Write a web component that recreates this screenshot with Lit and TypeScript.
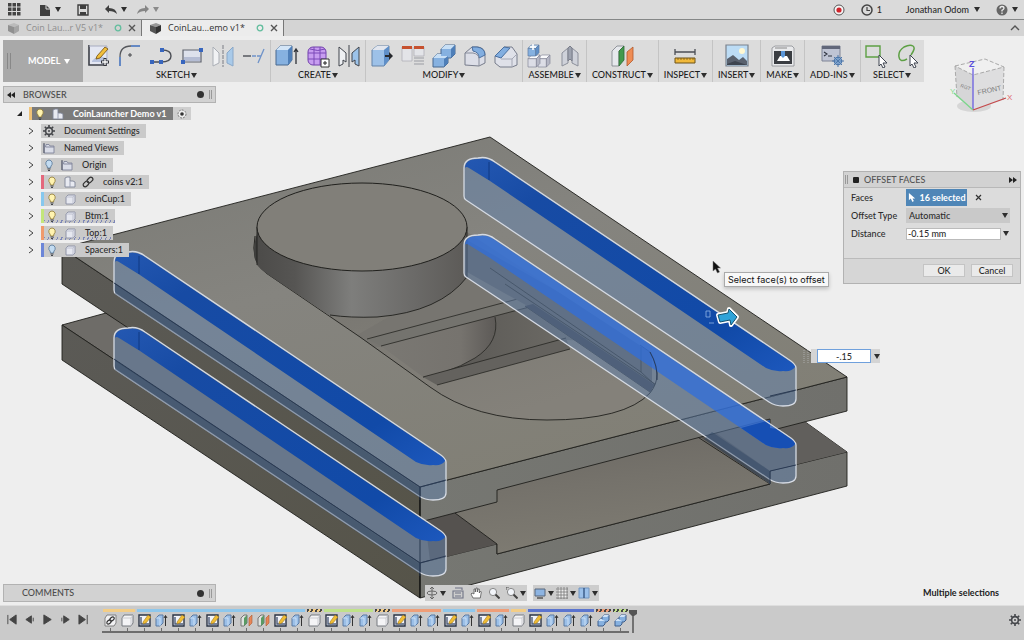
import { LitElement, html, css, svg, nothing } from "lit";
import { customElement, state } from "lit/decorators.js";
import { styleMap } from "lit/directives/style-map.js";

const cube = (x: number, y: number, s: number, top = "#c3dcf4", front = "#86b1e0", side = "#5f8fc8", line = "#5b7aa0") => svg`
  <g stroke=${line} stroke-width=".7" stroke-linejoin="round">
    <path fill=${front} d="M${x} ${y + s * 0.3}H${x + s * 0.7}V${y + s}H${x}Z"/>
    <path fill=${top} d="M${x} ${y + s * 0.3}L${x + s * 0.3} ${y}H${x + s}L${x + s * 0.7} ${y + s * 0.3}Z"/>
    <path fill=${side} d="M${x + s * 0.7} ${y + s * 0.3}L${x + s} ${y}V${y + s * 0.7}L${x + s * 0.7} ${y + s}Z"/>
  </g>`;
const greyCube = (x: number, y: number, s: number) => cube(x, y, s, "#fafafc", "#dcdde6", "#b4b6c4", "#85879a");

const ribbonArt: Record<string, unknown> = {
  sketch: svg`<path d="M2 2h19v19H2z" fill="#e4e7f2"/><path d="M2 1v20h18" fill="none" stroke="#3d4048" stroke-width="1.6"/><path d="M2 2h18v15" fill="none" stroke="#a7acc0" stroke-width="1"/><path d="M5 17q6-7 13-3v4H5z" fill="#b7c2dd"/><path d="M10 12l8-9 3 2-8 9-4 1z" fill="#f2bf3c" stroke="#7d5a18" stroke-width=".9"/><path d="M18 14v8M14 18h8" stroke="#2f3238" stroke-width="3"/><path d="M18 15v6M15 18h6" stroke="#fff" stroke-width="1.3"/>`,
  arc: svg`<path d="M2 22V13" stroke="#6589c4" stroke-width="2"/><path d="M2 13Q2 2 13 2" fill="none" stroke="#55575c" stroke-width="1.3"/><path d="M13 2h9" stroke="#6589c4" stroke-width="2"/><path d="M10 11h4M12 9v4" stroke="#44464a" stroke-width="1"/>`,
  line: svg`<path d="M2 18h10q10 0 10-6t-9-6" fill="none" stroke="#4b4e55" stroke-width="1.4"/><path d="M1 16h4v4H1zM10 16h4v4h-4zM11 4h4v4h-4z" fill="#3866be"/>`,
  rect: svg`<path d="M3 6h18v12H3z" fill="#dde1ec" stroke="#60646f" stroke-width="1.2"/><path d="M4 13h16v4H4z" fill="#b5bdd4"/><path d="M1 16h4v4H1zM19 4h4v4h-4z" fill="#3866be"/>`,
  mirrorSketch: svg`<path d="M2 3l6 6v10l-6 3z" fill="#f1f2f4" stroke="#abafb6"/><path d="M22 3l-6 6v10l6 3z" fill="#a9cae9" stroke="#8aa8c8"/><path d="M12 1v22" stroke="#7a7d84" stroke-width="1" stroke-dasharray="4 1"/>`,
  trim: svg`<path d="M1 12h8" stroke="#4b4e55" stroke-width="1.4"/><path d="M10 12h9" stroke="#6f93c9" stroke-width="1.4" stroke-dasharray="4 1"/><path d="M22 5l-6 14" stroke="#6f93c9" stroke-width="1.3"/>`,
  extrude: svg`<path d="M1 6l4-4h12v14l-4 5H1z" fill="#86b1e0" stroke="#48688f"/><path d="M1 6l4-4h12l-4 4z" fill="#d3e5f7"/><path d="M13 6l4-4v14l-4 5z" fill="#4f7fb8"/><path d="M21 20V6M19 8l2-3 2 3" fill="none" stroke="#2f3238" stroke-width="1.3"/>`,
  form: svg`<rect x="2" y="3" width="18" height="18" rx="5" fill="#c79df0" stroke="#7140ab"/><path d="M2 9h18M2 15h18M8 3v18M14 3v18M4 5q8 3 15 0" fill="none" stroke="#7b49b8" stroke-width="1"/><path d="M15 15h8v8h-8z" fill="#fff" stroke="#333"/><path d="M17 19h4M19 17v4" stroke="#222"/>`,
  mirror: svg`<path d="M2 3l7 6v9l-3-2v4l-4 2z" fill="#eef0f3" stroke="#41454d"/><path d="M22 3l-7 6v9l3-2v4l4 2z" fill="#9cc3ea" stroke="#41454d"/><path d="M12 1v22" stroke="#41454d"/>`,
  press: svg`<path d="M2 6l5-4h12v14l-5 6H2z" fill="#9dc1e8" stroke="#6483a8"/><path d="M2 6l5-4h12l-5 4z" fill="#e2e6ee"/><path d="M14 6l5-4v14l-5 6z" fill="#5f8fc8"/><path d="M15 11h4V8l4 4-4 4v-3h-4z" fill="#26282c"/>`,
  offset: svg`<path d="M1 3h10v14H1zM13 3h10v9H13z" fill="#e3e4e8" stroke="#a9abb2" stroke-width=".7"/><path d="M1 2h10v3H1zM13 2h10v3H13z" fill="#c6512f"/><path d="M13 14h10M13 17h10M13 20h10" stroke="#9a9ca3" stroke-width="1"/>`,
  combine: svg`<path d="M9 5l4-4h10v9l-4 4h-3v5l-4 4H1v-9l4-4h4z" fill="#86b1e0" stroke="#48688f"/><path d="M9 5l4-4h10l-4 4zM1 14l4-4h4v2h7l-2 2z" fill="#c8dff5"/><path d="M19 5l4-4v9l-4 4zM12 15l4-3v7l-4 4z" fill="#4f7fb8"/>`,
  fillet: svg`<path d="M2 21V9l7-6h6q7 1 7 8v8l-6 3z" fill="#dcdee7" stroke="#777c8b"/><path d="M9 3h5q8 1 8 8l-6 3q0-6-6-7z" fill="#82aee0" stroke="#4a6f9f"/><path d="M2 9h8q6 1 6 6v7" fill="none" stroke="#888d9b"/>`,
  chamfer: svg`<path d="M1 12l9-9h8l5 7v11l-5 2H6l-5-4z" fill="#dfe1e9" stroke="#777c8b"/><path d="M1 12l9-9 6 1L7 14z" fill="#82aee0" stroke="#4a6f9f"/><path d="M7 15h11l5-5M18 15v8" fill="none" stroke="#a5a8b5"/>`,
  component: svg`${greyCube(11, 11, 12)}${greyCube(1, 11, 12)}${cube(1, 1, 11)}<path d="M6 0v6M3 3h6" stroke="#fff" stroke-width="1.6"/>`,
  joint: svg`<path d="M4 9l6-5v15l-6 3zM20 9l-6-5v15l6 3z" fill="#cfd2da" stroke="#8c909b"/><path d="M10 4l2-2 2 2v13l-2-2-2 2z" fill="#9ea3af" stroke="#7b7f8b"/>`,
  plane: svg`<path d="M2 7l5-5h7L9 7v15H2z" fill="#e6e8ec" stroke="#7c8089" stroke-width=".8"/><path d="M9 7l5-5v14l-5 6z" fill="#439a4c" stroke="#2c6a34" stroke-width=".8"/><path d="M17 8l6-5v13l-6 6z" fill="#ef8d55" stroke="#b2592b" stroke-width=".8"/>`,
  measure: svg`<path d="M2 8h20M2 5v6M22 5v6" stroke="#4b4e55" stroke-width="1.3"/><path d="M2 14h20v5H2z" fill="#f1b93b" stroke="#6d5318"/><path d="M5 14v2M8 14v2M11 14v2M14 14v2M17 14v2M20 14v2" stroke="#6d5318" stroke-width=".7"/>`,
  picture: svg`<path d="M1 1h22v21H1z" fill="#bcdcf5" stroke="#7a828d" stroke-width="1.2"/><circle cx="17" cy="7" r="3" fill="#fff8d2"/><path d="M2 15l6-4 6 5 4-3 4 4v4H2z" fill="#59616e"/><path d="M2 20l8-3 12 4H2z" fill="#3d444f"/>`,
  print: svg`<path d="M1 4l3-2h17l2 2v18H1z" fill="#e9eaec" stroke="#8a8d92" stroke-width=".8"/><path d="M3 7h18v13H3z" fill="#3a3d42"/><path d="M6 17l3-5h7l3 5z" fill="#fff"/><path d="M10 7h4v5l-2 2-2-2z" fill="#5a96d8"/><path d="M4 4h12" stroke="#888"/>`,
  script: svg`<path d="M2 2h18v15H2z" fill="#bfc4d4" stroke="#7f8496"/><path d="M2 2h18v3H2z" fill="#61677a"/><path d="M4 8l3 2-3 2M8 12h4" fill="none" stroke="#2f3440" stroke-width="1.1"/><circle cx="18" cy="17" r="3.6" fill="#a7c7e9" stroke="#4e78ab" stroke-width="1.4"/><path d="M18 11v12M12 17h12M14 13l8 8M22 13l-8 8" stroke="#4e78ab" stroke-width="1"/>`,
  selectBox: svg`<path d="M1 2h14v11H1z" fill="none" stroke="#5da044" stroke-width="1.4"/><path d="M14 11l8 8h-4l2 4-2 1-2-4-2 2z" fill="#fff" stroke="#3e4450" stroke-width="1"/>`,
  selectFree: svg`<path d="M11 15q-7 4-8-2T8 3q6-3 9-1t-2 9" fill="none" stroke="#5da044" stroke-width="1.5"/><path d="M14 11l8 8h-4l2 4-2 1-2-4-2 2z" fill="#fff" stroke="#3e4450" stroke-width="1"/>`,
};

const featureArt: Record<string, unknown> = {
  link: svg`<path d="M1 4l2-3h9v8l-2 3H1z" fill="#f1f1f3" stroke="#808080"/><ellipse cx="8" cy="5" rx="2.5" ry="1.600" transform="rotate(-40 8 5)" fill="none" stroke="#333" stroke-width="1.1"/><ellipse cx="5" cy="8" rx="2.500" ry="1.600" transform="rotate(-40 5 8)" fill="none" stroke="#333" stroke-width="1.1"/>`,
  box: svg`<path d="M1 4l2-3h9v8l-2 3H1z" fill="#f4f4f6" stroke="#777a80" stroke-linejoin="round"/><path d="M1 4h9l2-3M10 4v8" fill="none" stroke="#c0c2c8" stroke-width=".8"/>`,
  sketch: svg`<path d="M1 1h11v11H1z" fill="#f3f5fa" stroke="#2b3445" stroke-width="1.4"/><path d="M3 3v7h8" fill="none" stroke="#4d5c78" stroke-width="1.4"/><path d="M5 8l5-7 3 2-5 6-3 1z" fill="#f0bd35" stroke="#8e6b1c" stroke-width=".5"/>`,
  extrude: svg`<path d="M1 4l3-3h4v8l-3 3H1z" fill="#9cc0e8" stroke="#5b7aa3" stroke-linejoin="round"/><path d="M1 4h4v8" fill="none" stroke="#d5e6f7" stroke-width=".8"/><path d="M10.500 12V2M9 4l1.500-2.500L12 4" fill="none" stroke="#333" stroke-width="1"/>`,
  plane: svg`<path d="M1 4l3-3h3v8l-3 3H1z" fill="#dfe3e0" stroke="#777"/><path d="M4 4l3-3v8l-3 3z" fill="#5a9a64"/><path d="M9 4l3-3v8l-3 3z" fill="#e98658" stroke="#a85a32" stroke-width=".6"/>`,
  combine: svg`<path d="M5 3l2-2h5v5l-2 2H8v2l-2 2H1V7l2-2h2z" fill="#86b1e0" stroke="#3f5f8c"/><path d="M5 3l2-2h5l-2 2zM1 7l2-2h2v1h3L6 7z" fill="#cfe2f6"/>`,
};

const icon = (art: unknown, size: number, box = size) => html`<svg width=${size} height=${size} viewBox="0 0 ${box} ${box}" aria-hidden="true">${art}</svg>`;
const caret = html`<i class="caret"></i>`;

const bulb = (fill: string, edge: string) => svg`<path d="M6 1a3.400 3.400 0 0 1 2 6L7.500 9h-3L4 7a3.400 3.400 0 0 1 2-6z" fill=${fill} stroke=${edge} stroke-width=".9"/><path d="M4.500 10h3M5 11.500h2" stroke="#44474d" stroke-width="1"/>`;
const treeArt: Record<string, unknown> = {
  on: bulb("#fff3b0", "#99853f"),
  off: bulb("#c3dcf2", "#5f7f9f"),
  gear: svg`<path d="M6 0v12M0 6h12M1.800 1.800l8.400 8.400M10.200 1.800l-8.400 8.400" stroke="#44464a" stroke-width="1.600"/><circle cx="6" cy="6" r="3.400" fill="#cfcfcf" stroke="#44464a" stroke-width="1.600"/><circle cx="6" cy="6" r="1" fill="#44464a"/>`,
  folder: svg`<path d="M1 2v9h10V4H7L6 2.500H3L2.500 5H11" fill="#dadde8" stroke="#80859a" stroke-width=".9"/><path d="M1 1v10" stroke="#4c5060"/>`,
  assembly: svg`<path d="M1 2l2-1h3v4h3l2 1v5H1z" fill="#e8eaf1" stroke="#7e8395" stroke-width=".9"/><path d="M6 5v6" stroke="#9da2b4"/>`,
  body: svg`<path d="M2 4l2-2h7v7l-2 2H2z" fill="#e6e8f0" stroke="#888da0" stroke-width=".9"/><path d="M2 4h7l2-2M9 4v7" fill="none" stroke="#b4b8c8" stroke-width=".8"/>`,
  chain: svg`<g transform="rotate(-45 6 6)" fill="none" stroke="#333" stroke-width="1.200"><rect x="0" y="4" width="6.500" height="4" rx="2"/><rect x="5.500" y="4" width="6.500" height="4" rx="2"/></g>`,
};

const groups = [
  { label: "SKETCH", icons: ["sketch", "arc", "line", "rect", "mirrorSketch", "trim"] },
  { label: "CREATE", icons: ["extrude", "form", "mirror"] },
  { label: "MODIFY", icons: ["press", "offset", "combine", "fillet", "chamfer"] },
  { label: "ASSEMBLE", icons: ["component", "joint"] },
  { label: "CONSTRUCT", icons: ["plane"] },
  { label: "INSPECT", icons: ["measure"] },
  { label: "INSERT", icons: ["picture"] },
  { label: "MAKE", icons: ["print"] },
  { label: "ADD-INS", icons: ["script"] },
  { label: "SELECT", icons: ["selectBox", "selectFree"] },
];

const nodes = [
  { label: "Document Settings", icons: ["gear"] },
  { label: "Named Views", icons: ["folder"] },
  { label: "Origin", icons: ["off", "folder"] },
  { label: "coins v2:1", icons: ["on", "assembly", "chain"], color: "#e4687c" },
  { label: "coinCup:1", icons: ["on", "body"], color: "#86c8ee" },
  { label: "Btm:1", icons: ["on", "body"], color: "#c3e67c", fixed: true },
  { label: "Top:1", icons: ["on", "body"], color: "#f09a6c", fixed: true },
  { label: "Spacers:1", icons: ["off", "body"], color: "#6c86d8" },
];

const S = "sketch", E = "extrude";
const history = [
  { color: "#f3cd86", items: ["link", "box"] },
  { color: "#8ec7ec", items: [S, E, S, E, S, E, "plane", "plane", S, E] },
  { color: "#f3cd86", items: ["box"], hatch: true },
  { color: "#bfe28a", items: [S, E, E] },
  { color: "#f3cd86", items: ["box"], hatch: true },
  { color: "#ef9e78", items: [S, E, E] },
  { color: "#8ec7ec", items: [S, E] },
  { color: "#ef9e78", items: [S, E] },
  { color: "#f3cd86", items: ["box"] },
  { color: "#5a74cf", items: [S, E, E, E] },
  { color: "#ef9e78", items: ["combine"], hatch: true },
  { color: "#bfe28a", items: ["combine"], hatch: true },
];

const slotOutline = "M114 262Q114 252 128 252Q137 250 145 256L438 453Q446 458 446 462V493Q446 500 433 500Q425 500 419 496L116 294Q114 293 114 290Z";
const slotWall = "M115 262Q115 253 128 253Q137 251 145 257L438 454Q446 459 445 461Q442 466 433 465Q424 466 416 462L140 275L119 262Q116 260 115 262Z";

const slot = (x: number, y: number, through = false) => svg`
  <g transform="translate(${x} ${y})">
    <path d=${slotOutline} fill="#6184b4" fill-opacity=".46"/>
    <path d=${slotWall} fill=${through ? "#2c6de0" : "url(#wall)"} fill-opacity=${through ? 0.72 : 1}/>
    ${through
      ? svg`<path d="M391 445L420 437V445L427 446L438 454Q446 459 445 461Q442 466 433 465Q424 466 416 462Z" fill="#164fb4"/>`
      : svg`<path d="M139 256V274" stroke="#0d3377" stroke-width=".8"/>`}
    <path d=${slotOutline} fill="none" stroke="#d5dae3" stroke-width="1.3"/>
  </g>`;

const scene = html`
  <svg class="scene" viewBox="0 36 1024 569" role="img" aria-label="Two slotted plates with sixteen selected faces">
    <defs>
      <linearGradient id="top" x1="0" y1="0" x2=".6" y2="1"><stop offset="0" stop-color="#797974"/><stop offset=".45" stop-color="#85847f"/><stop offset="1" stop-color="#817f75"/></linearGradient>
      <linearGradient id="side" x1="0" x2="1"><stop offset="0" stop-color="#4c4b49"/><stop offset=".18" stop-color="#565553"/><stop offset=".45" stop-color="#7e7e7c"/><stop offset=".75" stop-color="#6b6a68"/><stop offset="1" stop-color="#5c5a57"/></linearGradient>
      <linearGradient id="left" x1="0" y1="0" x2="1" y2="1"><stop offset="0" stop-color="#5b5a56"/><stop offset="1" stop-color="#565449"/></linearGradient>
      <linearGradient id="right" x1="0" x2="1"><stop offset="0" stop-color="#767772"/><stop offset="1" stop-color="#70706c"/></linearGradient>
      <linearGradient id="wall" x1="0" y1="0" x2="1" y2="1"><stop offset="0" stop-color="#2458b2"/><stop offset=".2" stop-color="#174ba4"/><stop offset=".8" stop-color="#114aa8"/><stop offset="1" stop-color="#1d58bd"/></linearGradient>
      <linearGradient id="channel" x1="0" y1="0" x2=".3" y2="1"><stop offset="0" stop-color="#6a6762"/><stop offset=".5" stop-color="#75726b"/><stop offset="1" stop-color="#7e7b72"/></linearGradient>
      <linearGradient id="floor" x1="0" y1="0" x2=".5" y2="1"><stop offset="0" stop-color="#6b6965"/><stop offset=".6" stop-color="#7c7a74"/><stop offset="1" stop-color="#84817a"/></linearGradient>
      <linearGradient id="drum" x1="0" x2="1"><stop offset="0" stop-color="#7a7873"/><stop offset=".7" stop-color="#76736e"/><stop offset="1" stop-color="#5d5a57"/></linearGradient>
      <linearGradient id="shade" x1="0" x2="1"><stop offset="0" stop-color="#565451"/><stop offset="1" stop-color="#74726c"/></linearGradient>
      <clipPath id="pocket"><path d="M255 236Q250 262 266 273L360 337L430 387Q475 420 547 420Q625 420 650 393Q664 376 650 352L467 232Z"/></clipPath>
    </defs>
    <g stroke="#1f1f1c" stroke-width=".9" stroke-linejoin="round">
      <path d="M62 325L106 313L420 510L790 411L847 452L420 563Z" fill="#6e6c68"/>
      <path d="M62 325L420 563V598L62 360Z" fill="url(#left)"/>
      <path d="M420 563L497 544V554L770 484V471L847 452V486L420 598Z" fill="url(#right)"/>
      <path d="M425 520L455 513L497 544L430 561Z" fill="#55524f" stroke="none"/>
      <path d="M745 422L805 422L847 452L770 471L712 432Z" fill="#615f5c" stroke="none"/>
      <path d="M455 513L497 544V554L770 484L690 432L497 488Z" fill="url(#channel)"/>
      <path d="M700 437L712 430L770 471V484Z" fill="#514f4c" stroke="none"/>
      <path d="M62 248L420 487V522L62 284Z" fill="url(#left)"/>
      <path d="M420 487L847 377V411L777 429L770 424V419L497 490V502L420 522Z" fill="url(#right)"/>
      <path d="M490 137L847 377L420 487L62 248Z" fill="url(#top)"/>
      <path d="M420 487V598" stroke="#151513" stroke-width="1.3"/>
    </g>
    <g clip-path="url(#pocket)" stroke="#262622" stroke-width=".8">
      <path d="M240 180H670V430H240Z" fill="url(#floor)" stroke="none"/>
      <path d="M340 345L470 270L540 305L381 347Z" fill="#777570" stroke="none"/>
      <path d="M440 330L537 305L620 342L566 340L423 378Z" fill="url(#shade)" stroke="none"/>
      <path d="M381 346L494 316Q500 342 475 358Q460 367 447 371L423 377Z" fill="url(#drum)" stroke="none"/>
      <path d="M495 317Q500 342 475 358Q460 367 447 371" fill="none"/>
      <path d="M367 339L525 297L537 305L381 346Z" fill="#74736e" stroke="none"/>
      <path d="M423 377L566 338L570 349L437 385Z" fill="#64625e" stroke="none"/>
      <path d="M367 339L525 297M381 346L537 305M423 377L566 338M437 385L570 349" fill="none"/>
      <path d="M467 240L652 345V393L540 313L467 272Z" fill="#5f5f5e" stroke="none"/>
      <path d="M505 284L655 384M490 268L641 372L655 385M525 306L650 392M641 347V372" fill="none"/>
      <path d="M525 306L650 392L655 385L533 304Z" fill="#3f4248" stroke="none"/>
    </g>
    <path d="M255 236Q250 262 266 273L360 337L430 387Q475 420 547 420Q625 420 650 393Q664 376 650 352L640 345" fill="none" stroke="#20201d" stroke-width=".9"/>
    <path d="M257 234Q248 262 266 273L285 286L280 240Z" fill="#3f3f3d"/>
    <path d="M257 227V265Q262 270 266 273L330 316Q350 318 377 317Q440 312 467 277V227Z" fill="url(#side)"/>
    <path d="M257 227V265M330 315Q350 318 377 317Q440 312 467 277V227" fill="none" stroke="#20201d" stroke-width=".9"/>
    <ellipse cx="362" cy="227" rx="105" ry="44" fill="#817f79" stroke="#20201d" stroke-width="1"/>
    ${slot(0, 0)}${slot(0, 76)}${slot(350, -94)}${slot(350, -17, true)}
    <path d="M114 283L420 487V500M114 359L420 563V576M420 487L446 480M420 563L446 556M770 484V471L796 465M770 396L796 390M657 380Q658 366 650 352" fill="none" stroke="#26364f" stroke-width=".9"/>
    <path d="M115 284L420 488V498L115 294ZM115 360L420 564V574L115 370ZM712 432L770 471V484L704 439Z" fill="#2b405f" fill-opacity=".4"/>
    <path d="M737 317L729 309L728 313L718 315L720 322L730 320L731 325Z" fill="#fff" stroke="#fff" stroke-width="4" stroke-linejoin="round"/>
    <path d="M737 317L729 309L728 313L718 315L720 322L730 320L731 325Z" fill="#2fa3d8" stroke="#12506f" stroke-width="1" stroke-linejoin="round"/>
    <path d="M706 311h4v6h-4zM709 323h5" fill="none" stroke="#8fb4e4" stroke-width=".8"/>
    <path d="M713 261v10l2.500-2 2 4 2-1-2-4h3z" fill="#111" stroke="#777" stroke-width=".5"/>
    <path d="M804 350v14M808 350v14" stroke="#aaa" stroke-width="1" stroke-dasharray="1 1"/>
  </svg>`;

const viewCube = html`
  <svg class="viewcube" width="74" height="66" viewBox="946 50 74 66" role="img" aria-label="View cube">
    <ellipse cx="974" cy="106" rx="17" ry="6" fill="#d6d6d6"/>
    <path d="M955 66L985 59L1004 67L973 75Z" fill="#f0f0f0"/>
    <path d="M955 66L973 75V110L957 97Z" fill="#d6d6d7"/>
    <path d="M973 75L1004 67L1003 100L973 110Z" fill="#dededf"/>
    <path d="M955 66L985 59L1004 67L973 75ZM955 66L957 97M1004 67L1003 100" fill="none" stroke="#a9a9a9" stroke-dasharray="4 2"/>
    <path d="M973 110V68" stroke="#6a5fe0" stroke-width="1.300"/>
    <path d="M973 110L954 93" stroke="#7bd68a" stroke-width="1.300"/>
    <path d="M973 110L1006 98" stroke="#c4494b" stroke-width="1.300"/>
    <text x="969" y="67" class="z">Z</text>
    <text x="1007" y="100" class="x">X</text>
    <text x="950" y="94" class="y">Y</text>
    <text x="978" y="95" class="face" transform="rotate(-12 978 95)">FRONT</text>
    <text x="960" y="87" class="face small" transform="rotate(20 960 87)">RGT</text>
  </svg>`;

@customElement("app-root")
export class AppRoot extends LitElement {
  @state() private distance = "-0.15 mm";
  @state() private offset = "-.15";

  static styles = css`
    :host { display: grid; grid-template-rows: 20px 16px 1fr 35px; height: 100vh; min-width: 0; overflow: hidden; background: #eee; color: #2c2c2c; font: 500 9px/12px Lato, "Open Sans", sans-serif; }
    * { box-sizing: border-box; }
    button, input, select { font: inherit; color: inherit; margin: 0; padding: 0; border: 0; border-radius: 0; background: none; }
    button { display: inline-flex; align-items: center; justify-content: center; white-space: nowrap; }
    svg { display: block; flex: none; }
    ul { list-style: none; margin: 0; padding: 0; }
    .caret { flex: none; width: 0; height: 0; border: 3px solid transparent; border-top: 5px solid #2e2e2e; border-bottom: 0; }
    .dim .caret { border-top-color: #8a8a8a; }

    .titlebar { display: flex; justify-content: space-between; align-items: center; padding: 0 6px 0 8px; background: #dadada; border-bottom: 1px solid #858787; }
    .tools { display: flex; align-items: center; gap: 16px; }
    .tools button { gap: 4px; }
    .tools .apps { margin-right: 2px; }
    .tools .dim { margin-left: -6px; }
    .account { gap: 16px; }
    .account .user { gap: 5px; margin-left: 8px; }

    .tabs { display: flex; background: #d4d4d4; font: 9px/12px "Open Sans", sans-serif; }
    .tab { display: flex; align-items: center; gap: 6px; width: 142px; padding: 0 5px 0 7px; border-right: 1px solid #777; background: #d2d2d2; color: #8e8e8e; }
    .tab .name { flex: 1; white-space: nowrap; }
    .tab.active { background: #ececec; color: #333; }
    .collapse { margin-left: auto; padding-right: 4px; }

    .stage { position: relative; min-height: 0; overflow: hidden; }
    .scene { position: absolute; inset: 0; width: 100%; height: 100%; }
    .viewcube { position: absolute; right: 4px; top: 14px; font: 8px/8px "Liberation Sans", sans-serif; }
    .z { fill: #5b50dd; font-weight: bold; font-size: 9px; } .x { fill: #e06a70; } .y { fill: #86dd92; }
    .face { fill: #7d7d7d; font-size: 7px; } .face.small { font-size: 5px; }

    .ribbon { position: relative; display: flex; width: max-content; height: 42px; margin: 4px 0 0 3px; background: #dcdcdc; }
    .mode { display: flex; align-items: center; gap: 17px; width: 80px; padding-left: 4px; background: #a9a9a9; color: #fff; font-weight: 700; }
    .mode i.grip { width: 4px; height: 16px; border: solid #888; border-width: 0 1px; }
    .mode button { gap: 4px; }
    .mode .caret { border-top-color: #fff; }
    .group { display: flex; flex-direction: column; align-items: center; gap: 1px; padding-top: 4px; border-right: 1px solid #c4c4c4; }
    .group:last-child { border: 0; }
    .icons { display: flex; gap: 7px; padding: 0 4px; }
    .group .label { gap: 1px; padding: 0 5px; color: #1c1c1c; }

    .left { position: relative; width: 213px; margin: 4px 0 0 3px; }
    .bar { display: flex; align-items: center; height: 17px; padding: 0 3px; background: #d2d2d2; border: 1px solid #b2b2b2; color: #4c4c4c; }
    .bar .title { flex: 1; padding-left: 8px; }
    .bar .knob { gap: 5px; }
    .dot { width: 7px; height: 7px; border-radius: 50%; background: #333; }
    .ridge { width: 3px; height: 9px; border: solid #999; border-width: 0 1px; }
    .tree { padding: 2px 0 0 13px; }
    .root, .node { display: flex; align-items: center; height: 17px; }
    .root { gap: 6px; }
    .chip { height: 14px; gap: 9px; padding: 0 6px 0 2px; background: #cacaca; white-space: nowrap; }
    .chip.marked { border-left: 3px solid; }
    .root .chip { height: 13px; background: #7b7b7b; border-left: 3px solid #f0c377; color: #fff; font-weight: 700; }
    .node { gap: 5px; padding-left: 12px; }
    .chip svg + svg { margin-left: -3px; }
    .chip.fixed { background-image: repeating-linear-gradient(115deg, #7d87b8 0 1px, transparent 1px 4px); background-size: 100% 3px; background-position: 0 100%; background-repeat: no-repeat; }
    .eye { height: 13px; width: 18px; margin-left: -6px; background: #cfcfcf; }

    .dialog { position: absolute; right: 3px; top: 135px; width: 178px; background: #dcdcdc; border: 1px solid #b2b2b2; }
    .dialog header { display: flex; align-items: center; gap: 5px; height: 16px; padding: 0 3px 0 1px; background: #d2d2d2; border-bottom: 1px solid #b8b8b8; color: #555; }
    .dialog header span { flex: 1; }
    .stop { width: 6px; height: 6px; border-radius: 1px; background: #222; }
    .fields { display: grid; grid-template-columns: 55px 1fr; align-items: center; row-gap: 1px; padding: 1px 9px 16px 7px; }
    .fields > div { display: flex; align-items: center; height: 17px; }
    .picked { gap: 3px; width: 61px; height: 17px; background: #4f86b7; color: #fff; font-weight: 700; }
    .clear { width: 22px; }
    .pick { flex: 1; }
    .pick select { width: 104px; height: 15px; padding-left: 3px; background: #c9c9c9; appearance: none; line-height: 15px; }
    .pick .caret { margin-left: -8px; pointer-events: none; }
    .entry { width: 95px; height: 12px; padding-left: 1px; background: #fff; border: 1px solid #bbb; }
    .fields .entry + button { padding-left: 2px; }
    .dialog footer { display: flex; justify-content: flex-end; gap: 6px; padding: 5px 7px 6px; background: #d6d6d6; border-top: 1px solid #bbb; }
    .dialog footer button { width: 42px; height: 13px; background: #eaeaea; border: 1px solid #c4c4c4; }

    .tip { position: absolute; left: 724px; top: 236px; padding: 0 3px; background: #f8f8f8; border: 1px solid #aaa; box-shadow: 0 2px 4px #0003; color: #111; font: 9px/13px "Inter", sans-serif; white-space: nowrap; }
    .value { position: absolute; left: 811px; top: 313px; display: flex; align-items: center; gap: 3px; padding-left: 6px; background: #d4d4d4; }
    .value input { width: 54px; height: 14px; background: #fff; border: 1px solid #6fa0dc; text-align: center; }

    .comments { position: absolute; left: 3px; bottom: 3px; width: 213px; height: 18px; }
    .comments .title { padding-left: 15px; }
    .nav { position: absolute; left: 425px; bottom: 4px; display: flex; gap: 6px; }
    .nav div { display: flex; align-items: center; gap: 6px; height: 16px; padding: 0 1px; background: #cdcdcd; }
    .nav button { gap: 2px; }
    .nav .views { gap: 2px; }
    .status { position: absolute; right: 25px; bottom: 6px; font-weight: 700; color: #222; }

    .timeline { display: flex; align-items: flex-start; padding: 3px 3px 0 6px; background: #cacaca; border-top: 1px solid #dedede; }
    .play { display: flex; gap: 6px; width: 96px; padding-top: 5px; }
    .track { display: flex; flex: 1; }
    .run { display: flex; flex-direction: column; }
    .run .tag { height: 3px; margin: 0 1px; }
    .run .hatch { background-image: repeating-linear-gradient(115deg, #444 0 2px, transparent 2px 4px); }
    .run .row { display: flex; }
    .feature { width: 17px; height: 16px; align-items: flex-start; padding-top: 2px; }
    .ruler { height: 5px; border-bottom: 2px solid #6d6d6d; background: repeating-linear-gradient(90deg, transparent 0 8px, #6d6d6d 8px 9px, transparent 9px 17px); }
    .settings { padding-top: 5px; }
  `;

  private titlebar() {
    return html`<header class="titlebar">
      <div class="tools">
        <button class="apps" aria-label="Data panel">${icon(svg`<path d="M0 0h3.500v3.500H0zM4.500 0H8v3.500H4.500zM9 0h3.500v3.500H9zM0 4.500h3.500V8H0zM4.500 4.500H8V8H4.500zM9 4.500h3.500V8H9zM0 9h3.500v3.500H0zM4.500 9H8v3.500H4.500zM9 9h3.500v3.500H9z" fill="#444"/>`, 13)}</button>
        <button aria-label="File">${icon(svg`<path d="M1 1h6l4 4v7H1z" fill="#3f3f3f"/><path d="M7 1v4h4" fill="none" stroke="#ddd"/>`, 12)}${caret}</button>
        <button aria-label="Save">${icon(svg`<path d="M1 1h10v10H1z" fill="none" stroke="#3f3f3f" stroke-width="1.400"/><path d="M3 1h6v4H3zM3 8h6v3H3z" fill="#3f3f3f"/>`, 12)}</button>
        <button aria-label="Undo">${icon(svg`<path d="M0 5l4-4v3q7 0 8 6-3-3-8-3v2z" fill="#3f3f3f"/>`, 12)}${caret}</button>
        <button class="dim" aria-label="Redo">${icon(svg`<path d="M12 5L8 1v3Q1 4 0 10q3-3 8-3v2z" fill="#858585"/>`, 12)}${caret}</button>
      </div>
      <div class="tools account">
        <button aria-label="Record">${icon(svg`<circle cx="6" cy="6" r="5" fill="#f5f5f5" stroke="#555"/><circle cx="6" cy="6" r="2.600" fill="#d0242b"/>`, 12)}</button>
        <button aria-label="Job status">${icon(svg`<circle cx="6" cy="6" r="5" fill="none" stroke="#444" stroke-width="1.500"/><path d="M6 3v3.500h3" fill="none" stroke="#444" stroke-width="1.200"/>`, 12)}1</button>
        <button class="user">Jonathan Odom ${caret}</button>
        <button aria-label="Help">${icon(svg`<circle cx="6" cy="6" r="5.500" fill="#666"/><path d="M4 4.500q0-2 2-2t2 1.800q0 1-2 2V7.500M6 8.500v1.500" fill="none" stroke="#eee" stroke-width="1.300"/>`, 12)}${caret}</button>
      </div>
    </header>`;
  }

  private tab(name: string, active: boolean) {
    const c = active ? "#555" : "#909090";
    return html`<div class="tab ${active ? "active" : ""}">
      ${icon(svg`<path d="M1 3l6-2 5 2-5 2z" fill=${active ? "#999" : "#bbb"}/><path d="M1 3l6 2v7L1 9z" fill=${c}/><path d="M12 3L7 5v7l5-3z" fill=${active ? "#333" : "#a5a5a5"}/>`, 13)}
      <span class="name">${name}</span>
      ${icon(svg`<circle cx="4" cy="4" r="2.800" fill="none" stroke="#62bd9d" stroke-width="1.300"/>`, 8)}
      <button aria-label="Close ${name}">${icon(svg`<path d="M1 1l6 6M7 1L1 7" stroke="#555" stroke-width="1.400"/>`, 8)}</button>
    </div>`;
  }

  private browser() {
    return html`<aside class="left">
      <div class="bar">${icon(svg`<path d="M4 1v6L0 4zM8 1v6L4 4z" fill="#222"/>`, 8)}<span class="title">BROWSER</span>
        <button class="knob" aria-label="Pin browser"><i class="dot"></i><i class="ridge"></i></button></div>
      <ul class="tree">
        <li class="root">${icon(svg`<path d="M6 1v5H1z" fill="#222"/>`, 7)}
          <button class="chip">${icon(treeArt.on, 12)}${icon(treeArt.assembly, 12)}CoinLauncher Demo v1</button>
          <button class="eye" aria-label="Activate component">${icon(svg`<circle cx="5" cy="5" r="4" fill="#eee" stroke="#777" stroke-dasharray="2 1"/><circle cx="5" cy="5" r="1.800" fill="#333"/>`, 10)}</button></li>
        ${nodes.map((n) => html`<li class="node">${icon(svg`<path d="M1 1l4 3-4 3" fill="none" stroke="#444" stroke-width="1"/>`, 8)}
          <button class="chip ${n.color ? "marked" : ""} ${n.fixed ? "fixed" : ""}" style=${n.color ? styleMap({ borderLeftColor: n.color }) : nothing}>${n.icons.map((i) => icon(treeArt[i], 12))}${n.label}</button></li>`)}
      </ul>
    </aside>`;
  }

  private dialog() {
    return html`<section class="dialog" aria-label="Offset faces">
      <header><i class="ridge"></i><i class="stop"></i><span>OFFSET FACES</span>${icon(svg`<path d="M0 1v6l4-3zM4 1v6l4-3z" fill="#222"/>`, 8)}</header>
      <div class="fields">
        <span>Faces</span>
        <div><button class="picked">${icon(svg`<path d="M1 0v8l2-2 2 4 1.500-1L5 6h3z" fill="#fff"/>`, 9, 10)}16 selected</button>
          <button class="clear" aria-label="Clear selection">${icon(svg`<path d="M1 1l5 5M6 1L1 6" stroke="#333" stroke-width="1.200"/>`, 7)}</button></div>
        <label for="type">Offset Type</label>
        <div class="pick"><select id="type"><option>Automatic</option></select>${caret}</div>
        <label for="distance">Distance</label>
        <div><input id="distance" class="entry" .value=${this.distance} @input=${(e: Event) => (this.distance = (e.target as HTMLInputElement).value)}><button aria-label="Distance options">${caret}</button></div>
      </div>
      <footer><button>OK</button><button>Cancel</button></footer>
    </section>`;
  }

  private timeline() {
    const play: [string, string][] = [
      ["First", "M2 1v10M11 1v10L4 6z"], ["Back", "M8 2v8L2 6zM10 4v4"], ["Play", "M2 1v10l8-5z"],
      ["Forward", "M4 2v8l6-4zM2 4v4"], ["Last", "M1 1v10l7-5zM10 1v10"],
    ];
    return html`<footer class="timeline">
      <div class="play">${play.map(([n, d]) => html`<button aria-label=${n}>${icon(svg`<path d=${d} fill="#444" stroke="#444" stroke-width="1"/>`, 12, 13)}</button>`)}</div>
      <div class="track">
        ${history.map((g) => html`<div class="run">
          <i class="tag ${g.hatch ? "hatch" : ""}" style=${styleMap({ backgroundColor: g.color })}></i>
          <div class="row">${g.items.map((i) => html`<button class="feature" aria-label=${i}>${icon(featureArt[i], 13)}</button>`)}</div>
          <i class="ruler"></i></div>`)}
        <svg width="10" height="26" viewBox="0 0 10 26" aria-hidden="true"><path d="M0 1h8v4L5 7H3L0 4z" fill="#555"/><path d="M4 4v20" stroke="#555" stroke-width="1.500"/></svg>
      </div>
      <button class="settings" aria-label="Timeline settings">${icon(treeArt.gear, 12)}</button>
    </footer>`;
  }

  render() {
    return html`
      ${this.titlebar()}
      <nav class="tabs">${this.tab("Coin Lau...r V5 v1*", false)}${this.tab("CoinLau...emo v1*", true)}
        <button class="collapse" aria-label="Collapse ribbon">${icon(svg`<path d="M1 7l4-4 4 4" fill="none" stroke="#555" stroke-width="1.400"/>`, 10)}</button></nav>
      <main class="stage">
        ${scene}
        <div class="ribbon">
          <div class="mode"><i class="grip"></i><button>MODEL ${caret}</button></div>
          ${groups.map((g) => html`<div class="group">
            <div class="icons">${g.icons.map((i) => html`<button aria-label=${i}>${icon(ribbonArt[i], 24)}</button>`)}</div>
            <button class="label">${g.label}${caret}</button></div>`)}
        </div>
        ${this.browser()}
        ${viewCube}
        ${this.dialog()}
        <div class="tip" role="tooltip">Select face(s) to offset</div>
        <div class="value"><input aria-label="Offset value" .value=${this.offset} @input=${(e: Event) => (this.offset = (e.target as HTMLInputElement).value)}><button aria-label="Value options">${caret}</button></div>
        <div class="bar comments"><span class="title">COMMENTS</span><button class="knob" aria-label="Add comment"><i class="dot"></i><i class="ridge"></i></button></div>
        <div class="nav">
          <div>
            <button aria-label="Orbit">${icon(svg`<path d="M6 0v12M4 2l2-2 2 2M4 10l2 2 2-2" fill="none" stroke="#666"/><ellipse cx="6" cy="6" rx="5" ry="2" fill="none" stroke="#666"/>`, 12)}${caret}</button>
            <button aria-label="Look at">${icon(svg`<path d="M1 4h10v7H1zM3 1h7v2M3 6h6M3 9h6" fill="none" stroke="#6f7385" stroke-width="1.100"/>`, 12)}</button>
            <button aria-label="Pan">${icon(svg`<path d="M3 11L1 7l1-1 2 1V2h1.300v3L6 1h1.300v4L8 2h1.300v4l1-2 1 1-1 6z" fill="#fff" stroke="#555" stroke-width=".8"/>`, 12)}</button>
            <button aria-label="Zoom">${icon(svg`<circle cx="5" cy="5" r="3.600" fill="#f2f5fa" stroke="#888"/><path d="M7.500 7.500l4 4" stroke="#444" stroke-width="2"/>`, 12)}</button>
            <button aria-label="Fit">${icon(svg`<circle cx="5" cy="5" r="3.600" fill="#f2f5fa" stroke="#888"/><path d="M7.500 7.500l4 4" stroke="#444" stroke-width="2"/><path d="M0 3V0h3" fill="none" stroke="#555"/>`, 12)}${caret}</button>
          </div>
          <div class="views">
            <button aria-label="Display">${icon(svg`<path d="M1 2h10v7H1z" fill="#8db4e2" stroke="#59667a"/><path d="M3 11h6" stroke="#555" stroke-width="1.500"/>`, 12)}${caret}</button>
            <button aria-label="Grid">${icon(svg`<path d="M1 1h10v10H1z" fill="#eee"/><path d="M0 2h12M0 5h12M0 8h12M0 11h12M2 0v12M5 0v12M8 0v12M11 0v12" stroke="#777" stroke-width=".8"/>`, 12)}${caret}</button>
            <button aria-label="Viewports">${icon(svg`<path d="M1 1h10v10H1z" fill="#9bc0ea" stroke="#7296c2"/><path d="M6 1v10" stroke="#2f4f7c" stroke-width="1.300"/>`, 12)}${caret}</button>
          </div>
        </div>
        <div class="status">Multiple selections</div>
      </main>
      ${this.timeline()}`;
  }
}
